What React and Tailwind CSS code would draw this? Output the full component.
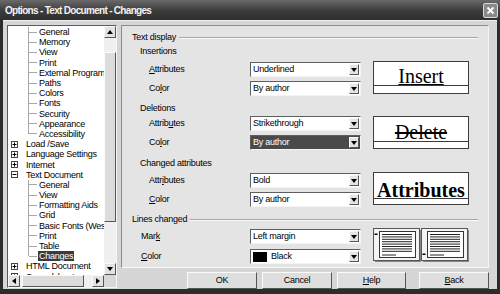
import React from "react";

const tree = [
  { t: "General", l: 2 },
  { t: "Memory", l: 2 },
  { t: "View", l: 2 },
  { t: "Print", l: 2 },
  { t: "External Programs", l: 2 },
  { t: "Paths", l: 2 },
  { t: "Colors", l: 2 },
  { t: "Fonts", l: 2 },
  { t: "Security", l: 2 },
  { t: "Appearance", l: 2 },
  { t: "Accessibility", l: 2, last: true },
  { t: "Load /Save", l: 1, box: "+" },
  { t: "Language Settings", l: 1, box: "+" },
  { t: "Internet", l: 1, box: "+" },
  { t: "Text Document", l: 1, box: "-" },
  { t: "General", l: 2 },
  { t: "View", l: 2 },
  { t: "Formatting Aids", l: 2 },
  { t: "Grid", l: 2 },
  { t: "Basic Fonts (Western)", l: 2 },
  { t: "Print", l: 2 },
  { t: "Table", l: 2 },
  { t: "Changes", l: 2, last: true, sel: true },
  { t: "HTML Document", l: 1, box: "+" },
  { t: "Spreadsheet", l: 1, box: "+" },
];

function Arrow({ dir }) {
  const cls = {
    down: "border-x-[3px] border-x-transparent border-t-[4px] border-t-black",
    up: "border-x-[3px] border-x-transparent border-b-[4px] border-b-black",
    left: "border-y-[3px] border-y-transparent border-r-[4px] border-r-black",
    right: "border-y-[3px] border-y-transparent border-l-[4px] border-l-black",
  }[dir];
  return <span className={`w-0 h-0 ${cls}`} />;
}

function ScrollBtn({ dir }) {
  return (
    <div className="w-[12px] h-[12px] shrink-0 bg-[#e2e2e2] border border-t-[#fafafa] border-l-[#fafafa] border-b-[#555] border-r-[#555] flex items-center justify-center">
      <Arrow dir={dir} />
    </div>
  );
}

function ExpBox({ sign }) {
  return (
    <svg width="7" height="7" viewBox="0 0 7 7" className="shrink-0">
      <rect x="0.5" y="0.5" width="6" height="6" fill="white" stroke="#444" />
      <line x1="1.5" y1="3.5" x2="5.5" y2="3.5" stroke="#000" />
      {sign === "+" && <line x1="3.5" y1="1.5" x2="3.5" y2="5.5" stroke="#000" />}
    </svg>
  );
}

function Tree() {
  return (
    <div className="w-[110px] h-[263px] shrink-0 flex flex-col bg-white border border-t-[#5a5a5a] border-l-[#5a5a5a] border-b-[#f6f6f6] border-r-[#f6f6f6]">
      <div className="flex flex-1 min-h-0">
        <div className="flex-1 overflow-hidden pt-[1px]">
          {tree.map((r, i) => (
            <div key={i} className="h-[10.2px] flex items-center whitespace-nowrap">
              {r.l === 2 ? (
                <>
                  <div className="w-[21px] self-stretch shrink-0 flex flex-col">
                    <div className={`w-[21px] border-r border-[#a8a8a8] ${r.last ? "h-1/2" : "h-full"}`} />
                  </div>
                  <div className="w-[8px] shrink-0 border-t border-[#a8a8a8]" />
                  <span className={`ml-[1px] px-[1px] leading-[10px] ${r.sel ? "bg-[#3a3a3a] text-white" : ""}`}>{r.t}</span>
                </>
              ) : (
                <>
                  <div className="w-[3px] shrink-0" />
                  <ExpBox sign={r.box} />
                  <span className="ml-[8px] leading-[10px]">{r.t}</span>
                </>
              )}
            </div>
          ))}
        </div>
        <div className="w-[12px] flex flex-col bg-[#f0f0f0]">
          <ScrollBtn dir="up" />
          <div className="flex-1 pt-[14px]">
            <div className="h-[170px] bg-[#dcdcdc] border border-t-[#fafafa] border-l-[#fafafa] border-b-[#555] border-r-[#555]" />
          </div>
          <ScrollBtn dir="down" />
        </div>
      </div>
      <div className="h-[12px] flex">
        <div className="flex-1 flex bg-[#f0f0f0]">
          <ScrollBtn dir="left" />
          <div className="flex-1 pl-[2px]">
            <div className="w-[62px] h-[12px] bg-[#dcdcdc] border border-t-[#fafafa] border-l-[#fafafa] border-b-[#555] border-r-[#555]" />
          </div>
          <ScrollBtn dir="right" />
        </div>
        <div className="w-[12px] bg-[#d8d8d8]" />
      </div>
    </div>
  );
}

function Drop({ value, dark, swatch }) {
  return (
    <div
      className={`w-[111px] h-[15px] shrink-0 flex items-center border border-t-[#5e5e5e] border-l-[#5e5e5e] border-b-[#f4f4f4] border-r-[#f4f4f4] ${
        dark ? "bg-[#4a4a4a] text-white" : "bg-white text-black"
      }`}
    >
      <div className="flex-1 flex items-center pl-[2px] gap-[4px]">
        {swatch && <span className="w-[14px] h-[10px] bg-black" />}
        <span>{value}</span>
      </div>
      <div className="w-[10px] h-[11px] mr-[1px] bg-[#e4e4e4] border border-t-[#fafafa] border-l-[#fafafa] border-b-[#555] border-r-[#555] flex items-center justify-center">
        <Arrow dir="down" />
      </div>
    </div>
  );
}

function Row({ label, children, indent }) {
  return (
    <div className="h-[15px] flex items-center">
      <div className={`${indent ? "pl-[9px]" : "pl-[17px]"} w-[118px] shrink-0`}>{label}</div>
      {children}
    </div>
  );
}

function U({ children }) {
  return <span className="underline underline-offset-[1px]">{children}</span>;
}

function Preview({ children, line }) {
  return (
    <div className="w-[96px] h-[33px] ml-[12px] bg-white border border-[#3c3c3c] flex flex-col">
      <div className={`${line} flex items-end justify-center overflow-hidden`}>{children}</div>
      <div className="border-t border-[#3c3c3c]" />
    </div>
  );
}

function Pages() {
  const lines = [0, 1, 2, 3, 4, 5, 6, 7];
  const page = (ox, mark) => (
    <g>
      <rect x={ox + 0.5} y="0.5" width="46" height="32" fill="#f4f4f4" stroke="#555" />
      <rect x={ox + 47} y="2" width="1" height="31" fill="#888" />
      <rect x={ox + 2} y="33" width="46" height="1" fill="#888" />
      <rect x={ox + 6.5} y="3.5" width="36" height="26" fill="white" stroke="#333" />
      {lines.map((i) => (
        <rect key={i} x={ox + 9} y={6 + i * 2.4} width="30" height="1" fill="#222" />
      ))}
      <rect x={ox + 9} y="26.5" width="14" height="1" fill="#222" />
      <rect x={ox + mark[0]} y={mark[1]} width="3" height="1.5" fill="#000" />
    </g>
  );
  return (
    <svg width="96" height="34" viewBox="0 0 96 34" className="ml-[12px]">
      {page(0, [1.5, 5.5])}
      {page(48, [1.5, 25.5])}
    </svg>
  );
}

function Btn({ children, w = "w-[70px]" }) {
  return (
    <div className={`${w} h-[17px] flex items-center justify-center bg-[#dedede] border border-t-[#fbfbfb] border-l-[#fbfbfb] border-b-[#555] border-r-[#555]`}>
      {children}
    </div>
  );
}

export default function App() {
  return (
    <div className="w-[500px] h-[294px] bg-[#2c2c2c] flex flex-col font-['Liberation_Sans',Arial,sans-serif] text-[9px] tracking-[-0.25px] text-black overflow-hidden">
      {/* Title bar */}
      <div className="h-[20px] shrink-0 flex items-center justify-between pl-[5px] pr-[2px] bg-gradient-to-b from-[#6a6a6a] via-[#3e3e3e] to-[#2e2e2e]">
        <span className="text-[#f2f2f2] font-bold text-[10px] tracking-[-0.7px]">Options - Text Document - Changes</span>
        <div className="w-[15px] h-[15px] mt-[1px] rounded-[2px] border border-[#d8d8d8] bg-[#8a8a8a] flex items-center justify-center">
          <svg width="9" height="9" viewBox="0 0 9 9">
            <path d="M1.5 1.5 L7.5 7.5 M7.5 1.5 L1.5 7.5" stroke="white" strokeWidth="1.8" />
          </svg>
        </div>
      </div>

      {/* Body */}
      <div className="flex-1 ml-[3px] mr-[3px] mb-[5px] bg-[#d6d6d6] border-t border-[#f0f0f0] flex pt-[4px] pl-[4px]">
        <Tree />
        <div className="ml-[4px] w-[368px] flex flex-col">
          <div className="h-[243px] bg-[#e4e4e4] border border-t-[#8c8c8c] border-l-[#8c8c8c] border-b-[#f6f6f6] border-r-[#f6f6f6] flex flex-col pl-[10px] pr-[10px]">
            <div className="h-[12px] mt-[6px] flex items-center gap-[3px]">
              <span>Text display</span>
              <div className="flex-1 border-t border-b border-t-[#a6a6a6] border-b-[#fafafa]" />
            </div>
            <div className="h-[12px] mt-[2px] pl-[8px] flex items-center">Insertions</div>
            <div className="mt-[3px] flex items-start">
              <div className="flex flex-col gap-[4px] pt-[1px]">
                <Row label={<><U>A</U>ttributes</>}><Drop value="Underlined" /></Row>
                <Row label={<>Co<U>l</U>or</>}><Drop value="By author" /></Row>
              </div>
              <Preview line="h-[23px]">
                <span className="font-['Liberation_Serif',serif] tracking-normal text-[20px] leading-none underline underline-offset-[1px] px-[2px] mb-[-1px]">Insert</span>
              </Preview>
            </div>
            <div className="h-[12px] mt-[7px] pl-[8px] flex items-center">Deletions</div>
            <div className="mt-[1px] flex items-start">
              <div className="flex flex-col gap-[4px]">
                <Row label={<>Attrib<U>u</U>tes</>}><Drop value="Strikethrough" /></Row>
                <Row label={<>Co<U>l</U>or</>}><Drop value="By author" dark /></Row>
              </div>
              <Preview line="h-[24px]">
                <span className="font-['Liberation_Serif',serif] tracking-normal text-[20px] leading-none line-through px-[1px] mb-[-1px]">Delete</span>
              </Preview>
            </div>
            <div className="h-[12px] mt-[8px] pl-[8px] flex items-center">Changed attributes</div>
            <div className="mt-[2px] flex items-start">
              <div className="flex flex-col gap-[4px] pt-[1px]">
                <Row label={<>Attr<U>i</U>butes</>}><Drop value="Bold" /></Row>
                <Row label={<><U>C</U>olor</>}><Drop value="By author" /></Row>
              </div>
              <Preview line="h-[25px]">
                <span className="font-['Liberation_Serif',serif] tracking-normal font-bold text-[20px] leading-none mb-[-2px] whitespace-nowrap">Attributes</span>
              </Preview>
            </div>
            <div className="h-[12px] mt-[7px] flex items-center gap-[3px]">
              <span>Lines changed</span>
              <div className="flex-1 border-t border-b border-t-[#a6a6a6] border-b-[#fafafa]" />
            </div>
            <div className="mt-[2px] flex items-start">
              <div className="flex flex-col gap-[5px] pt-[1px]">
                <Row indent label={<>Mar<U>k</U></>}><Drop value="Left margin" /></Row>
                <Row indent label={<><U>C</U>olor</>}><Drop value="Black" swatch /></Row>
              </div>
              <Pages />
            </div>
          </div>
          <div className="mt-[4px] flex justify-end gap-[5px]">
            <Btn>OK</Btn>
            <Btn>Cancel</Btn>
            <Btn w="w-[69px]"><U>H</U>elp</Btn>
            <div className="w-[3px]" />
            <Btn><U>B</U>ack</Btn>
          </div>
        </div>
      </div>
    </div>
  );
}
